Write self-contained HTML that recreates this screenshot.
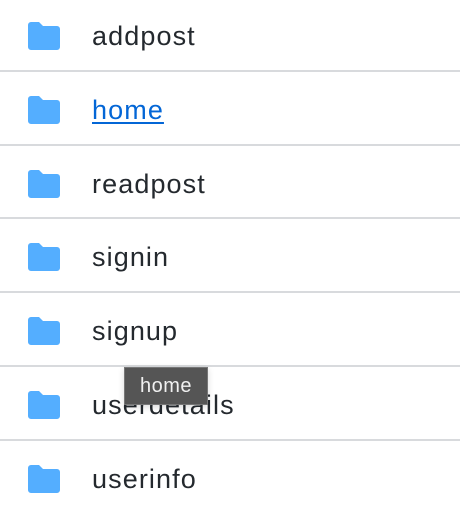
<!DOCTYPE html>
<html><head><style>
body{margin:0;width:460px;height:508px;background:#fff;font-family:"Liberation Sans",sans-serif;overflow:hidden;position:relative}
.wrap{position:absolute;left:0;top:-2px;width:460px}
.row{height:71.8px;border-bottom:2px solid #d8dadd;position:relative}
.row svg{position:absolute;left:28px;top:24px}
.row span{position:absolute;left:92px;top:22px;font-size:27px;letter-spacing:1.1px;color:#24292e;line-height:32px}
.row span.a{color:#0366d6;text-decoration:underline;text-underline-offset:3px}
.tip{position:absolute;left:124px;top:367px;width:82px;height:36px;background:#555;border:1px solid #777;color:#f0f0f0;font-size:20px;letter-spacing:.5px;line-height:36px;text-align:center;box-shadow:0 2px 6px rgba(0,0,0,.15)}
</style></head><body>
<div class="wrap">
<div class="row"><svg width="32" height="28" viewBox="0 0 32 28"><path d="M3 0h8l4 4h14a3 3 0 0 1 3 3v18a3 3 0 0 1-3 3H3a3 3 0 0 1-3-3V3a3 3 0 0 1 3-3z" fill="#54aeff"/></svg><span>addpost</span></div>
<div class="row"><svg width="32" height="28" viewBox="0 0 32 28"><path d="M3 0h8l4 4h14a3 3 0 0 1 3 3v18a3 3 0 0 1-3 3H3a3 3 0 0 1-3-3V3a3 3 0 0 1 3-3z" fill="#54aeff"/></svg><span class="a">home</span></div>
<div class="row"><svg width="32" height="28" viewBox="0 0 32 28"><path d="M3 0h8l4 4h14a3 3 0 0 1 3 3v18a3 3 0 0 1-3 3H3a3 3 0 0 1-3-3V3a3 3 0 0 1 3-3z" fill="#54aeff"/></svg><span>readpost</span></div>
<div class="row"><svg width="32" height="28" viewBox="0 0 32 28"><path d="M3 0h8l4 4h14a3 3 0 0 1 3 3v18a3 3 0 0 1-3 3H3a3 3 0 0 1-3-3V3a3 3 0 0 1 3-3z" fill="#54aeff"/></svg><span>signin</span></div>
<div class="row"><svg width="32" height="28" viewBox="0 0 32 28"><path d="M3 0h8l4 4h14a3 3 0 0 1 3 3v18a3 3 0 0 1-3 3H3a3 3 0 0 1-3-3V3a3 3 0 0 1 3-3z" fill="#54aeff"/></svg><span>signup</span></div>
<div class="row"><svg width="32" height="28" viewBox="0 0 32 28"><path d="M3 0h8l4 4h14a3 3 0 0 1 3 3v18a3 3 0 0 1-3 3H3a3 3 0 0 1-3-3V3a3 3 0 0 1 3-3z" fill="#54aeff"/></svg><span>userdetails</span></div>
<div class="row" style="border:none"><svg width="32" height="28" viewBox="0 0 32 28"><path d="M3 0h8l4 4h14a3 3 0 0 1 3 3v18a3 3 0 0 1-3 3H3a3 3 0 0 1-3-3V3a3 3 0 0 1 3-3z" fill="#54aeff"/></svg><span>userinfo</span></div>
</div>
<div class="tip">home</div>
</body></html>
